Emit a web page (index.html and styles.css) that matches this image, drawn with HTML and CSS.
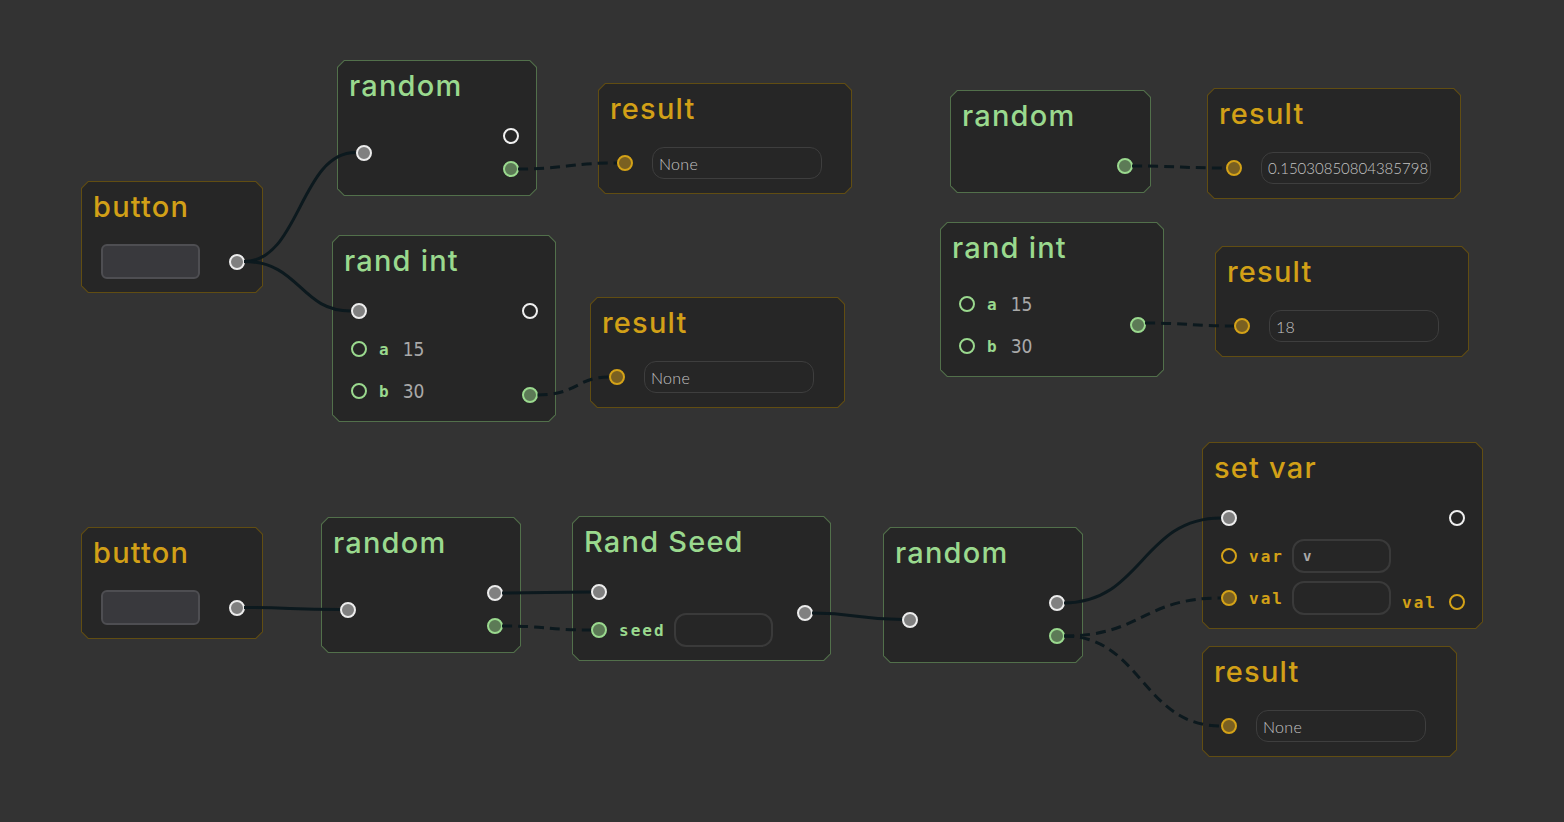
FILE: index.html
```html
<!DOCTYPE html>
<html lang="en">
<head>
    <meta charset="UTF-8">
    <meta name="viewport" content="width=device-width, initial-scale=1.0">
    <title>node graph</title>
    <link rel="stylesheet" href="styles.css">
</head>
<body>
    <div class="canvas">

        <!-- top left: button -> random / rand int -> result -->
        <div class="node gold" style="left:81px;top:181px;width:182px">
            <div class="node-inner">
                <div class="title">button</div>
                <div class="body">
                    <div class="btn"></div>
                    <span class="port exec"></span>
                </div>
            </div>
        </div>

        <div class="node green" style="left:337px;top:60px;width:200px">
            <div class="node-inner">
                <div class="title">random</div>
                <div class="body">
                    <div class="ins">
                        <div class="row"><span class="port exec"></span></div>
                    </div>
                    <div class="outs">
                        <div class="row"><span class="port hollow-w"></span></div>
                        <div class="row"><span class="port val-g"></span></div>
                    </div>
                </div>
            </div>
        </div>

        <div class="node gold" style="left:598px;top:83px;width:254px">
            <div class="node-inner">
                <div class="title">result</div>
                <div class="body">
                    <div class="row field">
                        <span class="port val-y"></span>
                        <div class="box result-box">None</div>
                    </div>
                </div>
            </div>
        </div>

        <div class="node green" style="left:332px;top:235px;width:224px">
            <div class="node-inner">
                <div class="title">rand int</div>
                <div class="body">
                    <div class="ins">
                        <div class="row"><span class="port exec"></span></div>
                        <div class="row field"><span class="port hollow-g"></span><span class="label">a</span><span class="num">15</span></div>
                        <div class="row field"><span class="port hollow-g"></span><span class="label">b</span><span class="num">30</span></div>
                    </div>
                    <div class="outs spread">
                        <div class="row"><span class="port hollow-w"></span></div>
                        <div class="row"><span class="port val-g"></span></div>
                    </div>
                </div>
            </div>
        </div>

        <div class="node gold" style="left:590px;top:297px;width:255px">
            <div class="node-inner">
                <div class="title">result</div>
                <div class="body">
                    <div class="row field">
                        <span class="port val-y"></span>
                        <div class="box result-box">None</div>
                    </div>
                </div>
            </div>
        </div>

        <!-- top right: pure nodes -->
        <div class="node green" style="left:950px;top:90px;width:201px">
            <div class="node-inner">
                <div class="title">random</div>
                <div class="body">
                    <div class="ins"></div>
                    <div class="outs">
                        <div class="row"><span class="port val-g"></span></div>
                    </div>
                </div>
            </div>
        </div>

        <div class="node gold" style="left:1207px;top:88px;width:254px">
            <div class="node-inner">
                <div class="title">result</div>
                <div class="body">
                    <div class="row field">
                        <span class="port val-y"></span>
                        <div class="box result-box long">0.15030850804385798</div>
                    </div>
                </div>
            </div>
        </div>

        <div class="node green" style="left:940px;top:222px;width:224px">
            <div class="node-inner">
                <div class="title">rand int</div>
                <div class="body tall">
                    <div class="ins">
                        <div class="row field"><span class="port hollow-g"></span><span class="label">a</span><span class="num">15</span></div>
                        <div class="row field"><span class="port hollow-g"></span><span class="label">b</span><span class="num">30</span></div>
                    </div>
                    <div class="outs">
                        <div class="row"><span class="port val-g"></span></div>
                    </div>
                </div>
            </div>
        </div>

        <div class="node gold" style="left:1215px;top:246px;width:254px">
            <div class="node-inner">
                <div class="title">result</div>
                <div class="body">
                    <div class="row field">
                        <span class="port val-y"></span>
                        <div class="box result-box">18</div>
                    </div>
                </div>
            </div>
        </div>

        <!-- bottom chain -->
        <div class="node gold" style="left:81px;top:527px;width:182px">
            <div class="node-inner">
                <div class="title">button</div>
                <div class="body">
                    <div class="btn"></div>
                    <span class="port exec"></span>
                </div>
            </div>
        </div>

        <div class="node green" style="left:321px;top:517px;width:200px">
            <div class="node-inner">
                <div class="title">random</div>
                <div class="body">
                    <div class="ins">
                        <div class="row"><span class="port exec"></span></div>
                    </div>
                    <div class="outs">
                        <div class="row"><span class="port exec"></span></div>
                        <div class="row"><span class="port val-g"></span></div>
                    </div>
                </div>
            </div>
        </div>

        <div class="node green" style="left:572px;top:516px;width:259px">
            <div class="node-inner">
                <div class="title">Rand Seed</div>
                <div class="body">
                    <div class="ins">
                        <div class="row"><span class="port exec"></span></div>
                        <div class="row field"><span class="port val-g"></span><span class="label">seed</span><div class="box small"></div></div>
                    </div>
                    <div class="outs">
                        <div class="row"><span class="port exec"></span></div>
                    </div>
                </div>
            </div>
        </div>

        <div class="node green" style="left:883px;top:527px;width:200px">
            <div class="node-inner">
                <div class="title">random</div>
                <div class="body">
                    <div class="ins">
                        <div class="row"><span class="port exec"></span></div>
                    </div>
                    <div class="outs">
                        <div class="row"><span class="port exec"></span></div>
                        <div class="row"><span class="port val-g"></span></div>
                    </div>
                </div>
            </div>
        </div>

        <div class="node gold" style="left:1202px;top:442px;width:281px">
            <div class="node-inner">
                <div class="title">set var</div>
                <div class="body">
                    <div class="ins">
                        <div class="row"><span class="port exec"></span></div>
                        <div class="row field"><span class="port hollow-y"></span><span class="label">var</span><div class="box small mono">v</div></div>
                        <div class="row field"><span class="port val-y"></span><span class="label">val</span><div class="box small"></div></div>
                    </div>
                    <div class="outs spread">
                        <div class="row"><span class="port hollow-w"></span></div>
                        <div class="row"><span class="label right">val</span><span class="port hollow-y"></span></div>
                    </div>
                </div>
            </div>
        </div>

        <div class="node gold" style="left:1202px;top:646px;width:255px">
            <div class="node-inner">
                <div class="title">result</div>
                <div class="body">
                    <div class="row field">
                        <span class="port val-y"></span>
                        <div class="box result-box">None</div>
                    </div>
                </div>
            </div>
        </div>

        <svg class="wires" width="1564" height="822">
            <path class="wire" d="M244 261.5 C300 261.5 300 152.5 355.5 152.5"/>
            <path class="wire" d="M244 261.5 C300 261.5 300 311 350.5 311"/>
            <path class="wire dashed" d="M518 169 C567 169 567 163 617 163"/>
            <path class="wire dashed" d="M537.5 395 C577 395 577 377 609 377"/>
            <path class="wire dashed" d="M1132 166 C1180 166 1180 168 1226 168"/>
            <path class="wire dashed" d="M1145 323 C1190 323 1190 326 1234 326"/>
            <path class="wire" d="M244 607.5 C290 607.5 290 609.5 340 609.5"/>
            <path class="wire" d="M502 593 C546 593 546 592 591 592"/>
            <path class="wire dashed" d="M502 626 C546 626 546 630 591 630"/>
            <path class="wire" d="M812 613 C857 613 857 619.5 902 619.5"/>
            <path class="wire" d="M1064 603 C1142 603 1142 518 1221 518"/>
            <path class="wire dashed" d="M1064 636 C1142 636 1142 598 1221 598"/>
            <path class="wire dashed" d="M1064 636 C1142 636 1142 726 1221 726"/>
        </svg>
    </div>
</body>
</html>
```

FILE: styles.css
```css
* {
    box-sizing: border-box;
}
body {
    margin: 0;
    background: #333333;
    font-family: "Open Sans", sans-serif;
    overflow: hidden;
}
.canvas {
    position: relative;
    width: 1564px;
    height: 822px;
}
.wires {
    position: absolute;
    left: 0;
    top: 0;
    z-index: 2;
    pointer-events: none;
}
.wire {
    fill: none;
    stroke: #0c191e;
    stroke-width: 3;
}
.wire.dashed {
    stroke-dasharray: 10 6;
}

/* node frame with cut corners */
.node {
    position: absolute;
    z-index: 1;
    padding: 1px;
    clip-path: polygon(7px 0, calc(100% - 7px) 0, 100% 7px, 100% calc(100% - 7px), calc(100% - 7px) 100%, 7px 100%, 0 calc(100% - 7px), 0 7px);
}
.node.green {
    background: #52704b;
    color: #9ad98e;
}
.node.gold {
    background: #614d12;
    color: #d2a017;
}
.node-inner {
    background: #262626;
    padding: 0 18px 13px 18px;
    clip-path: polygon(6.5px 0, calc(100% - 6.5px) 0, 100% 6.5px, 100% calc(100% - 6.5px), calc(100% - 6.5px) 100%, 6.5px 100%, 0 calc(100% - 6.5px), 0 6.5px);
}
.title {
    height: 62px;
    margin: 0 -7px;
    padding-top: 10px;
    font-family: "Inter", "Open Sans", sans-serif;
    font-size: 29px;
    font-weight: 500;
    line-height: 29px;
    letter-spacing: 1.2px;
    white-space: nowrap;
}
.body {
    display: flex;
    justify-content: space-between;
    align-items: center;
}
.body.tall {
    padding-top: 2px;
}
.ins, .outs {
    display: flex;
    flex-direction: column;
    gap: 8px;
}
.outs {
    gap: 7px;
    align-items: flex-end;
}
.outs.spread {
    align-self: stretch;
    justify-content: space-between;
}
.row {
    display: flex;
    align-items: center;
    height: 26px;
}
.row.field {
    height: 34px;
}

/* ports */
.port {
    flex: none;
    width: 16px;
    height: 16px;
    margin: 0 -0.5px;
    border-radius: 50%;
    border: 2px solid;
}
.port.exec {
    background: #808080;
    border-color: #ececec;
}
.port.hollow-w {
    border-color: #efefef;
}
.port.val-g {
    background: #5c7a56;
    border-color: #9ad98e;
}
.port.hollow-g {
    border-color: #9ad98e;
}
.port.val-y {
    background: #7a6021;
    border-color: #d4a217;
}
.port.hollow-y {
    border-color: #d4a217;
}

.label {
    margin-left: 13px;
    font-family: "DejaVu Sans Mono", monospace;
    font-weight: bold;
    font-size: 16px;
    letter-spacing: 2px;
}
.label.right {
    margin-left: 0;
    margin-right: 12px;
}
.num {
    margin-left: 12px;
    color: #a9a9a9;
    font-family: "DejaVu Sans", sans-serif;
    font-stretch: condensed;
    font-size: 19px;
}
.box {
    display: flex;
    align-items: center;
    height: 32px;
    padding: 0 6px;
    border: 1px solid #3e3e3e;
    border-radius: 12px;
    color: #c4c4c4;
    font-family: "Lato", sans-serif;
    font-weight: 300;
    font-size: 16px;
    letter-spacing: 0.3px;
    white-space: nowrap;
    overflow: hidden;
}
.result-box {
    width: 170px;
    margin-left: 20px;
}
.result-box.long {
    padding-right: 2px;
    font-size: 15px;
    letter-spacing: 0;
}
.box.small {
    width: 99px;
    height: 34px;
    margin-left: 8px;
    border-width: 2px;
    border-color: #3a3a3a;
}
.box.mono {
    color: #a9a9a9;
    font-family: "DejaVu Sans Mono", monospace;
    font-weight: bold;
    font-size: 14px;
    padding-left: 9px;
}
.btn {
    width: 99px;
    height: 35px;
    margin-left: 1px;
    background: #39393d;
    border: 2px solid #4e4e52;
    border-radius: 6px;
}
```
